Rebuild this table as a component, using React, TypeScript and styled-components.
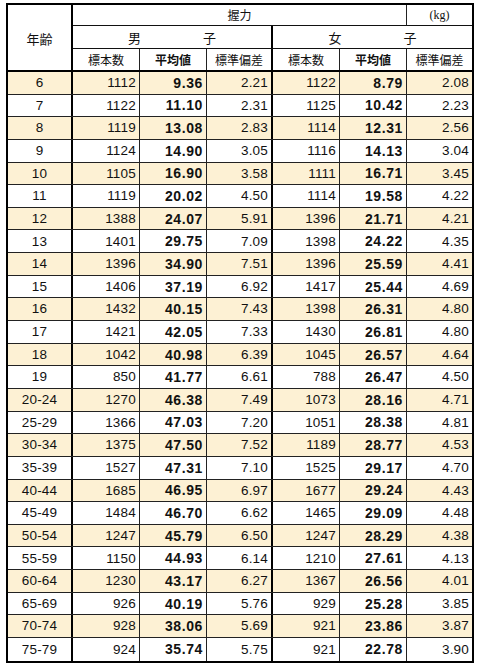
import React from "react";
import styled, { createGlobalStyle, css } from "styled-components";

const GlobalStyle = createGlobalStyle`
  html, body {
    margin: 0;
    padding: 0;
    background: #ffffff;
  }
  body {
    padding: 3px 0 0 6px;
    font-family: "Liberation Sans", "Noto Sans CJK JP", sans-serif;
    color: #111;
  }
  * {
    box-sizing: border-box;
  }
`;

const COLS = "65px 67px 67px 66px 67px 67px 65px";

type Edge = "thick" | "thin" | "none";

const edgeRight = (e: Edge = "thin") =>
  e === "thick" ? "2px solid #000" : e === "thin" ? "1px solid #222" : "none";

const Sheet = styled.div`
  width: 468px;
  border: 2px solid #000;
  display: flex;
  flex-direction: column;
`;

const HeaderGrid = styled.div`
  display: grid;
  grid-template-columns: ${COLS};
  grid-template-rows: 21px 23px 21px;
  border-bottom: 2px solid #000;
`;

const HeadCell = styled.div<{
  $edge?: Edge;
  $under?: boolean;
  $bold?: boolean;
  $col?: string;
  $row?: string;
}>`
  display: flex;
  align-items: center;
  justify-content: center;
  grid-column: ${(p) => p.$col ?? "auto"};
  grid-row: ${(p) => p.$row ?? "auto"};
  border-right: ${(p) => edgeRight(p.$edge)};
  border-bottom: ${(p) => (p.$under ? "1px solid #111" : "none")};
  font-family: "Noto Sans CJK JP", sans-serif;
  font-size: 12px;
  font-weight: ${(p) => (p.$bold ? 700 : 400)};
  line-height: 1;
  color: #111;
`;

const AgeHead = styled(HeadCell)`
  font-size: 13px;
  padding-top: 2px;
`;

const Unit = styled(HeadCell)`
  font-family: "Liberation Serif", serif;
  font-size: 12px;
`;

const Spaced = styled.span`
  display: inline-flex;
  gap: 62px;
  font-size: 13px;
`;

const DataRow = styled.div<{ $shade: boolean }>`
  display: grid;
  grid-template-columns: ${COLS};
  height: 22.65px;
  flex: none;
  background: ${(p) => (p.$shade ? "#fdf1d4" : "#ffffff")};
  border-bottom: 1px solid #222;
  &:last-child {
    border-bottom: none;
  }
`;

const Cell = styled.div<{ $edge?: Edge; $bold?: boolean; $center?: boolean }>`
  display: flex;
  align-items: center;
  justify-content: ${(p) => (p.$center ? "center" : "flex-end")};
  padding-right: ${(p) => (p.$center ? "0" : "3px")};
  border-right: ${(p) => edgeRight(p.$edge)};
  font-size: 13.5px;
  letter-spacing: 0.2px;
  line-height: 1;
  color: #111;
  ${(p) =>
    p.$bold &&
    css`
      font-size: 14px;
      font-weight: 700;
      letter-spacing: 0.6px;
    `}
`;

type Stat = [number, string, string];
type Entry = { age: string; m: Stat; f: Stat };

const data: Entry[] = [
  { age: "6", m: [1112, "9.36", "2.21"], f: [1122, "8.79", "2.08"] },
  { age: "7", m: [1122, "11.10", "2.31"], f: [1125, "10.42", "2.23"] },
  { age: "8", m: [1119, "13.08", "2.83"], f: [1114, "12.31", "2.56"] },
  { age: "9", m: [1124, "14.90", "3.05"], f: [1116, "14.13", "3.04"] },
  { age: "10", m: [1105, "16.90", "3.58"], f: [1111, "16.71", "3.45"] },
  { age: "11", m: [1119, "20.02", "4.50"], f: [1114, "19.58", "4.22"] },
  { age: "12", m: [1388, "24.07", "5.91"], f: [1396, "21.71", "4.21"] },
  { age: "13", m: [1401, "29.75", "7.09"], f: [1398, "24.22", "4.35"] },
  { age: "14", m: [1396, "34.90", "7.51"], f: [1396, "25.59", "4.41"] },
  { age: "15", m: [1406, "37.19", "6.92"], f: [1417, "25.44", "4.69"] },
  { age: "16", m: [1432, "40.15", "7.43"], f: [1398, "26.31", "4.80"] },
  { age: "17", m: [1421, "42.05", "7.33"], f: [1430, "26.81", "4.80"] },
  { age: "18", m: [1042, "40.98", "6.39"], f: [1045, "26.57", "4.64"] },
  { age: "19", m: [850, "41.77", "6.61"], f: [788, "26.47", "4.50"] },
  { age: "20-24", m: [1270, "46.38", "7.49"], f: [1073, "28.16", "4.71"] },
  { age: "25-29", m: [1366, "47.03", "7.20"], f: [1051, "28.38", "4.81"] },
  { age: "30-34", m: [1375, "47.50", "7.52"], f: [1189, "28.77", "4.53"] },
  { age: "35-39", m: [1527, "47.31", "7.10"], f: [1525, "29.17", "4.70"] },
  { age: "40-44", m: [1685, "46.95", "6.97"], f: [1677, "29.24", "4.43"] },
  { age: "45-49", m: [1484, "46.70", "6.62"], f: [1465, "29.09", "4.48"] },
  { age: "50-54", m: [1247, "45.79", "6.50"], f: [1247, "28.29", "4.38"] },
  { age: "55-59", m: [1150, "44.93", "6.14"], f: [1210, "27.61", "4.13"] },
  { age: "60-64", m: [1230, "43.17", "6.27"], f: [1367, "26.56", "4.01"] },
  { age: "65-69", m: [926, "40.19", "5.76"], f: [929, "25.28", "3.85"] },
  { age: "70-74", m: [928, "38.06", "5.69"], f: [921, "23.86", "3.87"] },
  { age: "75-79", m: [924, "35.74", "5.75"], f: [921, "22.78", "3.90"] },
];

export default function App() {
  return (
    <>
      <GlobalStyle />
      <Sheet>
        <HeaderGrid>
          <AgeHead $col="1" $row="1 / span 3" $edge="thick">
            年齢
          </AgeHead>
          <HeadCell $col="2 / span 5" $under>
            握力
          </HeadCell>
          <Unit $edge="none" $under>
            (kg)
          </Unit>
          <HeadCell $col="2 / span 3" $edge="thick" $under>
            <Spaced>
              <span>男</span>
              <span>子</span>
            </Spaced>
          </HeadCell>
          <HeadCell $col="5 / span 3" $edge="none" $under>
            <Spaced>
              <span>女</span>
              <span>子</span>
            </Spaced>
          </HeadCell>
          <HeadCell>標本数</HeadCell>
          <HeadCell $bold>平均値</HeadCell>
          <HeadCell $edge="thick">標準偏差</HeadCell>
          <HeadCell>標本数</HeadCell>
          <HeadCell $bold>平均値</HeadCell>
          <HeadCell $edge="none">標準偏差</HeadCell>
        </HeaderGrid>
        {data.map((d, i) => (
          <DataRow key={d.age} $shade={i % 2 === 0}>
            <Cell $center $edge="thick">
              {d.age}
            </Cell>
            <Cell>{d.m[0]}</Cell>
            <Cell $bold>{d.m[1]}</Cell>
            <Cell $edge="thick">{d.m[2]}</Cell>
            <Cell>{d.f[0]}</Cell>
            <Cell $bold>{d.f[1]}</Cell>
            <Cell $edge="none">{d.f[2]}</Cell>
          </DataRow>
        ))}
      </Sheet>
    </>
  );
}
